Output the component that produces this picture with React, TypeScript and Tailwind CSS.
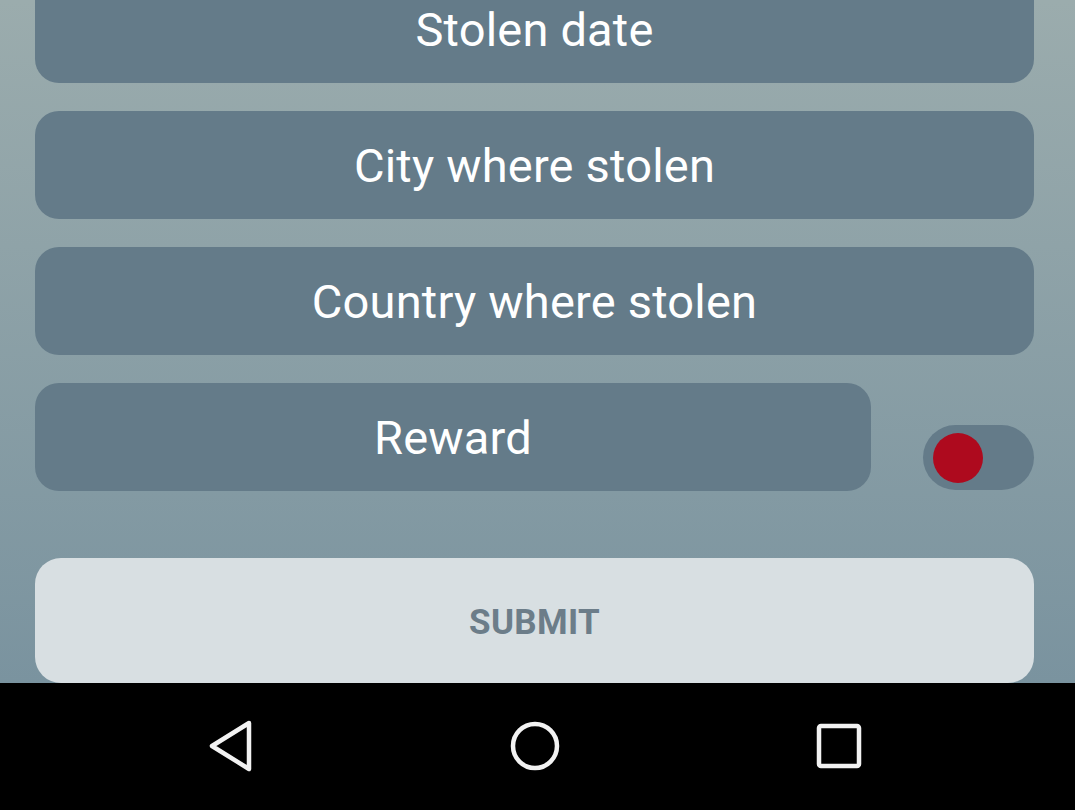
import React from "react";

const fields = ["Stolen date", "City where stolen", "Country where stolen"];

const Field = ({ label, className = "" }: { label: string; className?: string }) => (
	<div
		className={`h-[108px] rounded-[24px] bg-[#647b89] flex items-center justify-center pt-[2px] text-white text-[47px] tracking-[0.2px] ${className}`}>
		{label}
	</div>
);

export default function App() {
	return (
		<div
			className="w-[1075px] h-[810px] overflow-hidden flex flex-col"
			style={{ fontFamily: "Roboto, 'Liberation Sans', sans-serif" }}>
			<div className="h-[683px] bg-gradient-to-b from-[#9bacad] to-[#7a939f] px-[35px] pr-[41px] flex flex-col">
				<div className="-mt-[25px] flex flex-col gap-[28px]">
					{fields.map((f) => (
						<Field key={f} label={f} />
					))}
					<div className="flex items-center">
						<Field label="Reward" className="w-[836px]" />
						<div className="ml-auto mt-[41px] w-[111px] h-[65px] rounded-full bg-[#647b89] flex items-center pl-[10px]">
							<div className="w-[50px] h-[50px] rounded-full bg-[#ae0a1e]" />
						</div>
					</div>
				</div>
				<button className="mt-[67px] h-[125px] rounded-[26px] bg-[#d8dfe2] pt-[5px] text-[#6c7d89] text-[35px] font-bold tracking-[0.3px]">
					SUBMIT
				</button>
			</div>
			<div className="flex-1 bg-black flex items-center justify-between pl-[206px] pr-[213px] pb-[2px]">
				<svg width="48" height="52" viewBox="0 0 48 52" fill="none" stroke="#f2f2f2" strokeWidth="4.5" strokeLinejoin="round">
					<path d="M43 3 L6 26 L43 49 Z" />
				</svg>
				<svg width="50" height="50" viewBox="0 0 50 50" fill="none" stroke="#f2f2f2" strokeWidth="4.5">
					<circle cx="25" cy="25" r="22" />
				</svg>
				<svg width="46" height="46" viewBox="0 0 46 46" fill="none" stroke="#f2f2f2" strokeWidth="4.5" strokeLinejoin="round">
					<rect x="3" y="3" width="40" height="40" rx="2" />
				</svg>
			</div>
		</div>
	);
}
